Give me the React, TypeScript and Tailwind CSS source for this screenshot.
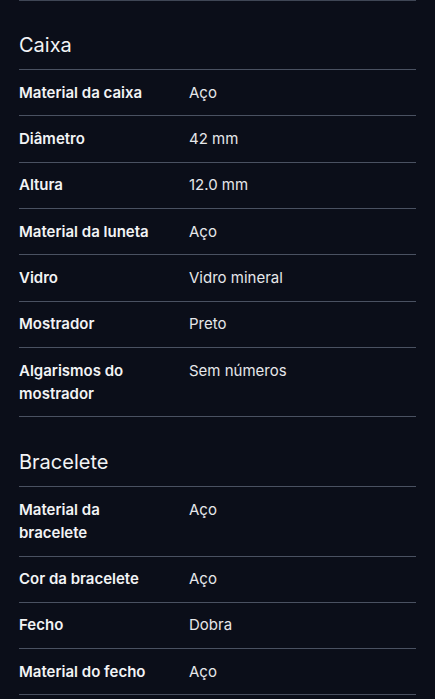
import React from 'react';

type Row = { label: string; value: string };

const sections: { title: string; rows: Row[] }[] = [
  {
    title: 'Caixa',
    rows: [
      { label: 'Material da caixa', value: 'Aço' },
      { label: 'Diâmetro', value: '42 mm' },
      { label: 'Altura', value: '12.0 mm' },
      { label: 'Material da luneta', value: 'Aço' },
      { label: 'Vidro', value: 'Vidro mineral' },
      { label: 'Mostrador', value: 'Preto' },
      { label: 'Algarismos do mostrador', value: 'Sem números' },
    ],
  },
  {
    title: 'Bracelete',
    rows: [
      { label: 'Material da bracelete', value: 'Aço' },
      { label: 'Cor da bracelete', value: 'Aço' },
      { label: 'Fecho', value: 'Dobra' },
      { label: 'Material do fecho', value: 'Aço' },
    ],
  },
];

export default function App() {
  return (
    <div
      className="min-h-[699px] bg-[#0b0e19] px-[19px] text-[#f2f3f5]"
      style={{ fontFamily: 'Inter, "Noto Sans", sans-serif' }}
    >
      <div className="border-t border-[#3f4655]" />
      {sections.map((section, i) => (
        <div key={section.title}>
          <h2
            className={`${i === 0 ? 'pt-[30px]' : 'pt-[31px]'} pb-[10px] text-[20px] leading-[28px] font-normal border-b border-[#4a5161]`}
          >
            {section.title}
          </h2>
          {section.rows.map(row => (
            <div key={row.label} className="flex py-[10.66px] border-b border-[#4a5161] text-[15px]">
              <div className="w-[170px] shrink-0 pr-[19px] font-semibold leading-[23.5px]">{row.label}</div>
              <div className="font-normal leading-[24px] text-[#e6e7ea]">{row.value}</div>
            </div>
          ))}
        </div>
      ))}
    </div>
  );
}
